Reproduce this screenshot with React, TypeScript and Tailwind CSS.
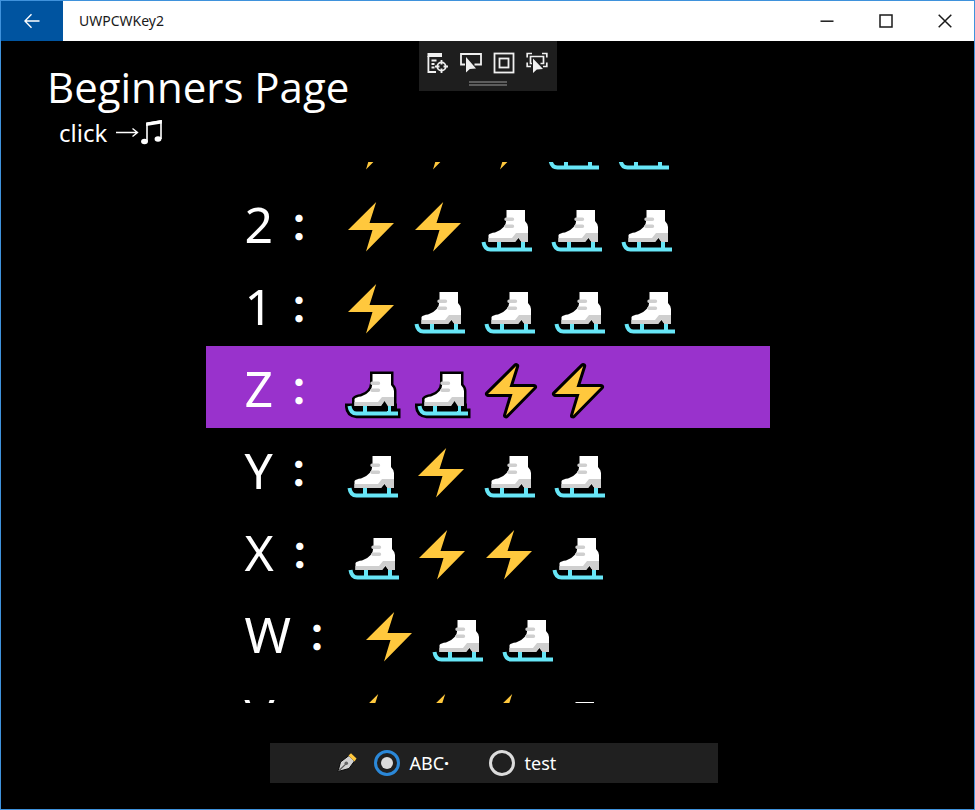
import { useEffect, useRef, useState } from 'react';

type Row = { label: string; code: string };

const rows: Row[] = [
  { label: '3', code: '...--' },
  { label: '2', code: '..---' },
  { label: '1', code: '.----' },
  { label: 'Z', code: '--..' },
  { label: 'Y', code: '-.--' },
  { label: 'X', code: '-..-' },
  { label: 'W', code: '.--' },
  { label: 'V', code: '...-' },
];

const BOLT = 'M38.2 20 L10 48 H34.5 L28 69.5 L56 41 H31.5 Z';
const BOOT = 'M34.5 28 H53 V39 Q56 42 56 45 V60 H49.5 L46.5 56 L43 60 H16.5 V53 Q18 51 23 50.5 Q34 47 34.5 37 Z';
const SOLE = 'M16.5 56 H40 L44 51 H56 V60 H49.5 L46.5 55.5 L43 60 H16.5 Z';
const BLADE = 'M11.5 60 Q12.5 67.5 18.5 67.5 H60 M27 60 V67 M51 60 V67';

// dot
function Bolt({ outlined }: { outlined: boolean }) {
  return (
    <svg className="block h-[82px] w-[67px] shrink-0" viewBox="0 0 67 82" aria-hidden="true">
      {outlined && <path d={BOLT} fill="#000" stroke="#000" strokeWidth="6" strokeLinejoin="round" />}
      <path d={BOLT} fill="#ffc83d" />
    </svg>
  );
}

// dash
function Skate({ outlined }: { outlined: boolean }) {
  return (
    <svg className="block h-[82px] w-[70px] shrink-0" viewBox="0 0 70 82" aria-hidden="true">
      {outlined && (
        <>
          <path d={BOOT} fill="#000" stroke="#000" strokeWidth="5" />
          <path d="M7 57.5 H59 V62.5 H62.5 V72.3 H18.5 Q7.5 71 7 61 Z" fill="#000" />
        </>
      )}
      <path d={BLADE} fill="none" stroke="#67e6f7" strokeWidth="4" />
      <path d={BOOT} fill="#fff" />
      <path d={SOLE} fill="#cfcfcf" />
      {outlined && <path d="M43 60.5 L46.5 55 L50 60.5 V65 H29.5 V60.5 Z" fill="#000" />}
      <path d="M34 37.3 H40.5 M34 44.3 H40.5" stroke="#cfcfcf" strokeWidth="3.4" strokeLinecap="round" />
    </svg>
  );
}

function TitleBar() {
  return (
    <header className="flex h-10 shrink-0 items-stretch bg-white text-[#1a1a1a]">
      <button aria-label="Back" className="flex w-[62px] items-center justify-center bg-[#0054a0] text-white">
        <svg className="size-4" viewBox="0 0 16 16" fill="none" stroke="currentColor" strokeWidth="1.4">
          <path d="M15.5 8 H1 M7.5 1.3 L0.9 8 L7.5 14.7" />
        </svg>
      </button>
      <h2 className="flex flex-1 items-center px-4 text-sm">UWPCWKey2</h2>
      <button aria-label="Minimize" className="flex w-[59px] items-center justify-center">
        <svg className="size-3.5" viewBox="0 0 14 14" stroke="currentColor" strokeWidth="1.5">
          <path d="M0.5 7.2 H13.5" />
        </svg>
      </button>
      <button aria-label="Maximize" className="flex w-[59px] items-center justify-center">
        <svg className="size-3.5" viewBox="0 0 14 14" fill="none" stroke="currentColor" strokeWidth="1.5">
          <rect x="1" y="1" width="12" height="12" />
        </svg>
      </button>
      <button aria-label="Close" className="flex w-[59px] items-center justify-center">
        <svg className="size-3.5" viewBox="0 0 14 14" stroke="currentColor" strokeWidth="1.5">
          <path d="M0.7 0.7 L13.3 13.3 M13.3 0.7 L0.7 13.3" />
        </svg>
      </button>
    </header>
  );
}

function DebugToolbar() {
  return (
    <div className="absolute top-0 left-1/2 flex w-[138px] -translate-x-1/2 flex-col items-center bg-[#1e1e1e] pt-2 text-[#f0f0f0]">
      <div className="flex">
        <button aria-label="Go to live visual tree" className="flex h-7 w-[33px] items-center justify-center">
          <svg className="size-[22px]" viewBox="0 0 22 22" fill="none" stroke="currentColor" strokeWidth="1.8">
            <path d="M0.5 1 H15 V5 H0.5 Z" fill="currentColor" stroke="none" />
            <path d="M1.4 4 V20 H9" />
            <path d="M4.5 8.5 H9.5 M4.5 12 H7.5 M4.5 15.5 H7.5" />
            <circle cx="14.5" cy="14.5" r="4.2" />
            <path d="M14.5 8 V12.5 M14.5 16.5 V21 M8 14.5 H12.5 M16.5 14.5 H21" />
          </svg>
        </button>
        <button aria-label="Enable selection" className="flex h-7 w-[33px] items-center justify-center">
          <svg className="size-[22px]" viewBox="0 0 22 22" fill="none" stroke="currentColor" strokeWidth="1.8">
            <path d="M5 12.5 H1 V2 H21 V12.5 H14.5" />
            <path d="M6 5 V20.5 L9.8 17 L16 16.5 Z" fill="currentColor" stroke="none" />
          </svg>
        </button>
        <button aria-label="Display layout adorners" className="flex h-7 w-[33px] items-center justify-center">
          <svg className="size-[22px]" viewBox="0 0 22 22" fill="none" stroke="currentColor" strokeWidth="1.8">
            <rect x="1.5" y="1.5" width="19" height="19" />
            <rect x="6.5" y="6.5" width="9" height="9" />
          </svg>
        </button>
        <button aria-label="Track focused element" className="flex h-7 w-[33px] items-center justify-center">
          <svg className="size-[22px]" viewBox="0 0 22 22" fill="none" stroke="currentColor" strokeWidth="1.7">
            <path d="M1.2 5.5 V1.5 H6 M16 1.5 H20.8 V5.5 M1.2 10.5 V14.5 H5 M20.8 10.5 V14.5 H17" />
            <path d="M6 11.5 H4.5 V4.5 H17.5 V11.5 H14.5" />
            <path d="M7 6.5 V21 L10.8 17.5 L17 17 Z" fill="currentColor" stroke="none" />
          </svg>
        </button>
      </div>
      <div className="mt-1 mb-[5px] h-[5px] w-[38px] border-y-2 border-[#5c5c5c]" />
    </div>
  );
}

function PenIcon() {
  return (
    <svg className="h-6 w-[22px]" viewBox="0 0 22 24" aria-hidden="true">
      <path d="M2 20.5 L4.5 11 L13 4.5 L18.5 10 L13 17.5 Z" fill="#d2d2d2" stroke="#0a0a0a" strokeWidth="1" strokeLinejoin="round" />
      <path d="M12.5 4.5 L15 2.2 L20.5 7.5 L18.5 10.5 Z" fill="#ffc83d" />
      <path d="M2.5 20 L10 12.8" stroke="#555" strokeWidth="1.1" />
      <circle cx="10.3" cy="12.3" r="1.8" fill="#666" />
    </svg>
  );
}

const radioClass =
  "grid size-[26px] appearance-none place-content-center rounded-full border-[3px] border-[#dcdcdc] before:size-3 before:rounded-full before:content-[''] checked:border-[#2b88d8] checked:before:bg-[#dcdcdc]";

function App() {
  const [selected, setSelected] = useState('Z');
  const [mode, setMode] = useState('abc');
  const listRef = useRef<HTMLUListElement>(null);

  // Centre the selected row
  useEffect(() => {
    if (listRef.current) listRef.current.scrollTop = 62;
  }, []);

  return (
    <div className="flex h-screen flex-col border border-[#3f92dc] bg-black font-['Noto_Sans','Noto_Sans_CJK_JP',sans-serif] text-white">
      <TitleBar />
      <main className="relative flex min-h-0 flex-1 flex-col pb-[26px]">
        <DebugToolbar />
        <div className="h-[121px] shrink-0 pt-5 pl-[46px]">
          <h1 className="font-['Open_Sans'] text-[42px] leading-[52px]">Beginners Page</h1>
          <button className="ml-3 flex h-10 items-center text-2xl leading-9">
            <span className="mr-2">click</span>
            <svg className="h-7 w-12" viewBox="0 0 48 28" aria-hidden="true">
              <path d="M1 13.5 H22 M17.5 9.5 L22.5 13.5 L17.5 17.5" fill="none" stroke="#fff" strokeWidth="1.4" />
              <path d="M32 22.5 V4.5 L46 2 V20" fill="none" stroke="#fff" strokeWidth="1.6" />
              <path d="M31.2 3.5 L46.8 1 V4.5 L31.2 7 Z" fill="#fff" />
              <ellipse cx="29.5" cy="22.5" rx="3.4" ry="2.8" fill="#fff" />
              <ellipse cx="43" cy="20" rx="3.4" ry="2.8" fill="#fff" />
            </svg>
          </button>
        </div>

        <ul ref={listRef} className="mx-auto min-h-0 w-[564px] max-w-full flex-1 overflow-y-auto [scrollbar-width:none]">
          {rows.map(({ label, code }) => (
            <li key={label}>
              <button
                onClick={() => setSelected(label)}
                className={`flex h-[82px] w-full items-center pl-[39px] leading-none ${
                  selected === label ? 'bg-[#9932cc]' : ''
                }`}
              >
                <span className="pt-0.5 text-[50px]">{label}</span>
                <span className="mr-[13px] w-[52px] pt-1 text-center font-['Noto_Sans_CJK_JP'] text-[38px] font-bold">：</span>
                {code.split('').map((c, i) =>
                  c === '.' ? (
                    <Bolt key={i} outlined={selected === label} />
                  ) : (
                    <Skate key={i} outlined={selected === label} />
                  )
                )}
              </button>
            </li>
          ))}
        </ul>

        <div className="mt-10 flex justify-center pl-3">
          <fieldset className="flex h-10 w-[448px] items-center bg-[#202020] pl-[66px] text-lg">
            <PenIcon />
            <label className="ml-4 flex w-[115px] items-center gap-2.5">
              <input type="radio" name="mode" checked={mode === 'abc'} onChange={() => setMode('abc')} className={radioClass} />
              <span>ABC<b>·</b></span>
            </label>
            <label className="flex items-center gap-2.5">
              <input type="radio" name="mode" checked={mode === 'test'} onChange={() => setMode('test')} className={radioClass} />
              test
            </label>
          </fieldset>
        </div>
      </main>
    </div>
  );
}

export default App;
